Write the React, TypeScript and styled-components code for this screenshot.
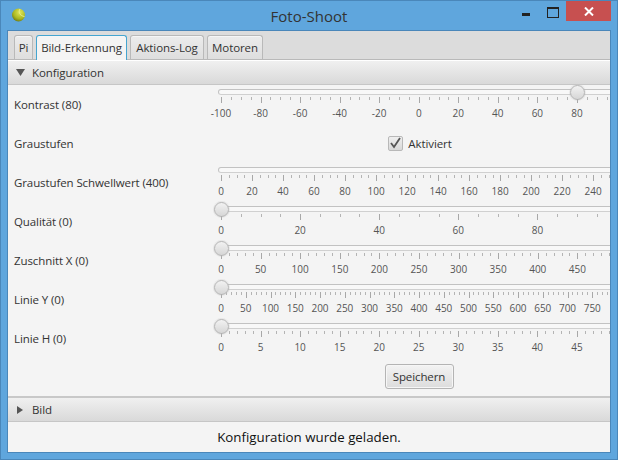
import styled, { createGlobalStyle } from 'styled-components';

const GlobalStyle = createGlobalStyle`
  html, body {
    margin: 0;
    padding: 0;
    background: #5fa6dd;
  }
  * {
    box-sizing: border-box;
  }
`;

const UI_FONT = `'Open Sans', 'Noto Sans', 'Liberation Sans', sans-serif`;

const Window = styled.div`
  width: 618px;
  height: 460px;
  display: flex;
  flex-direction: column;
  background: #5fa6dd;
  border: 1px solid #4a87ba;
  font-family: ${UI_FONT};
  font-size: 11.5px;
  letter-spacing: -0.1px;
  overflow: hidden;
`;
const TitleBar = styled.div`
  height: 29px;
  flex: none;
  display: grid;
  grid-template-columns: 1fr auto 1fr;
  align-items: start;
`;
const AppIcon = styled.svg`
  margin: 6px 0 0 10px;
  display: block;
`;
const Title = styled.div`
  font-size: 15px;
  letter-spacing: 0;
  line-height: 30px;
  color: #333;
`;
const Controls = styled.div`
  display: flex;
  justify-content: flex-end;
  align-items: flex-start;
  margin-right: 6px;
`;
const MinButton = styled.div`
  width: 27px;
  height: 20px;
  display: flex;
  justify-content: center;
  padding-top: 12px;
  &::before {
    content: '';
    width: 8px;
    height: 3px;
    background: #222;
  }
`;
const MaxButton = styled.div`
  width: 27px;
  height: 20px;
  display: flex;
  justify-content: center;
  padding-top: 6px;
  &::before {
    content: '';
    width: 10px;
    height: 8px;
    border: 1px solid #222;
    border-top-width: 2px;
  }
`;
const CloseButton = styled.div`
  width: 45px;
  height: 20px;
  background: #c75050;
  display: flex;
  align-items: center;
  justify-content: center;
`;
const Client = styled.div`
  flex: 1;
  margin: 0 6px 6px 6px;
  min-height: 0;
  display: flex;
  flex-direction: column;
  border: 1px solid #4a87ba;
  background: #f4f4f4;
  overflow: hidden;
`;
const TabStrip = styled.div`
  height: 29px;
  flex: none;
  display: flex;
  align-items: flex-end;
  gap: 3px;
  padding-left: 6px;
  background: #dcdcdc;
  border-bottom: 1px solid #b9b9b9;
`;
const Tab = styled.div<{ $active?: boolean; $width: number }>`
  width: ${(p) => p.$width}px;
  height: ${(p) => (p.$active ? 25 : 24)}px;
  margin-bottom: ${(p) => (p.$active ? -1 : 0)}px;
  border: 1px solid ${(p) => (p.$active ? '#45a5d0' : '#b9b9b9')};
  border-bottom: ${(p) => (p.$active ? 'none' : '0')};
  border-radius: 3px 3px 0 0;
  background: ${(p) =>
    p.$active ? '#f4f4f4' : 'linear-gradient(#ececec, #dedede)'};
  box-shadow: inset 0 1px 0 #f6f6f6;
  line-height: 23px;
  text-align: center;
  color: #333;
  white-space: nowrap;
`;
const AccordionHeader = styled.div<{ $thick?: boolean }>`
  height: ${(p) => (p.$thick ? 26 : 25)}px;
  flex: none;
  display: flex;
  align-items: center;
  gap: 7px;
  padding-left: 8px;
  background: linear-gradient(#f0f0f0, #d9d9d9);
  border-top: ${(p) => (p.$thick ? '2px solid #c8c8c8' : '1px solid #fff')};
  border-bottom: 1px solid #c6c6c6;
  color: #333;
`;
const Arrow = styled.svg`
  display: block;
  flex: none;
`;
const ConfigBody = styled.div`
  flex: 1;
  min-height: 0;
  padding-left: 6px;
  overflow: hidden;
`;
const Row = styled.div`
  height: 39px;
  display: grid;
  grid-template-columns: 204px 404px;
`;
const FieldLabel = styled.div`
  line-height: 39px;
  color: #333;
  white-space: nowrap;
`;
const SliderBox = styled.div`
  position: relative;
  padding-top: 4px;
`;
const Track = styled.div`
  height: 6px;
  border: 1px solid #c2c2c2;
  border-bottom-color: #d0d0d0;
  border-radius: 3px;
  background: #f8f8f8;
`;
const Thumb = styled.div`
  position: absolute;
  top: 0;
  width: 15px;
  height: 15px;
  margin-left: -7.5px;
  border-radius: 50%;
  border: 1px solid #b4b4b4;
  background: linear-gradient(#f2f2f2, #d6d6d6);
  box-shadow: 0 0 0 1px rgba(190, 190, 190, 0.25);
`;
const Ticks = styled.svg`
  display: block;
  margin: 2px 0 0 3px;
`;
const TickLabels = styled.div`
  display: flex;
  margin-top: 2px;
  font-size: 10px;
  letter-spacing: 0;
  line-height: 14px;
  color: #555;
`;
const TickLabel = styled.span`
  flex: none;
  text-align: center;
  white-space: nowrap;
`;
const CheckCell = styled.div`
  height: 39px;
  display: flex;
  align-items: center;
  justify-content: center;
  gap: 5px;
  padding-bottom: 1px;
  color: #333;
`;
const CheckBox = styled.div`
  width: 15px;
  height: 15px;
  border: 1px solid #b8b8b8;
  border-radius: 2px;
  background: linear-gradient(#efefef, #d8d8d8);
  display: flex;
  align-items: center;
  justify-content: center;
`;
const ButtonCell = styled.div`
  display: flex;
  justify-content: center;
  padding: 6px 2px 0 0;
`;
const SaveButton = styled.button`
  width: 69px;
  height: 25px;
  padding: 0 0 1px;
  border: 1px solid #b4b4b4;
  border-radius: 3px;
  background: linear-gradient(#f3f3f3, #dcdcdc);
  box-shadow: inset 0 0 0 1px #f6f6f6;
  font-family: inherit;
  font-size: inherit;
  letter-spacing: inherit;
  color: #333;
`;
const StatusBar = styled.div`
  height: 30px;
  flex: none;
  display: flex;
  align-items: center;
  justify-content: center;
  font-size: 13.3px;
  letter-spacing: 0;
  color: #111;
`;

type SliderProps = {
  labels: string[];
  spacing: number;
  minors: number;
  thumb?: number;
};

const AXIS_WIDTH = 396;

function Slider({ labels, spacing, minors, thumb }: SliderProps) {
  const majorLines: number[] = [];
  const minorLines: number[] = [];
  for (let i = 0; i * spacing <= AXIS_WIDTH; i++) {
    majorLines.push(Math.round(i * spacing) + 0.5);
    for (let m = 1; m <= minors; m++) {
      minorLines.push(
        Math.round((i + m / (minors + 1)) * spacing) + 0.5
      );
    }
  }
  return (
    <SliderBox>
      <Track />
      {thumb !== undefined && <Thumb style={{ left: thumb + 3 }} />}
      <Ticks width={AXIS_WIDTH} height={7}>
        {majorLines.map((x) => (
          <line key={x} x1={x} x2={x} y1={0} y2={6} stroke="#a8a8a8" />
        ))}
        {minorLines.map((x) => (
          <line key={x} x1={x} x2={x} y1={0} y2={3} stroke="#b4b4b4" />
        ))}
      </Ticks>
      <TickLabels style={{ marginLeft: 3 - spacing / 2 }}>
        {labels.map((text) => (
          <TickLabel key={text} style={{ width: spacing }}>
            {text}
          </TickLabel>
        ))}
      </TickLabels>
    </SliderBox>
  );
}

const range = (from: number, to: number, step: number) => {
  const out: string[] = [];
  for (let v = from; v <= to; v += step) out.push(String(v));
  return out;
};

export default function App() {
  return (
    <Window>
      <GlobalStyle />
      <TitleBar>
        <AppIcon width="16" height="16" viewBox="0 0 16 16">
          <defs>
            <radialGradient id="ball" cx="0.6" cy="0.3" r="0.8">
              <stop offset="0" stopColor="#dfe65a" />
              <stop offset="0.6" stopColor="#aab820" />
              <stop offset="1" stopColor="#5f6a14" />
            </radialGradient>
          </defs>
          <circle cx="7.5" cy="8" r="6.5" fill="url(#ball)" />
          <path
            d="M9 2 C7 5 9 9 13.5 9.5"
            fill="none"
            stroke="#eef3a0"
            strokeWidth="0.8"
          />
        </AppIcon>
        <Title>Foto-Shoot</Title>
        <Controls>
          <MinButton />
          <MaxButton />
          <CloseButton>
            <svg width="10" height="9" viewBox="0 0 10 9">
              <path
                d="M1 0.5 L9 8.5 M9 0.5 L1 8.5"
                stroke="#fff"
                strokeWidth="2"
              />
            </svg>
          </CloseButton>
        </Controls>
      </TitleBar>
      <Client>
        <TabStrip>
          <Tab $width={19}>Pi</Tab>
          <Tab $active $width={91}>
            Bild-Erkennung
          </Tab>
          <Tab $width={74}>Aktions-Log</Tab>
          <Tab $width={56}>Motoren</Tab>
        </TabStrip>
        <AccordionHeader>
          <Arrow width="9" height="7" viewBox="0 0 9 7">
            <path d="M0 0 H9 L4.5 7 Z" fill="#555" />
          </Arrow>
          Konfiguration
        </AccordionHeader>
        <ConfigBody>
          <Row>
            <FieldLabel>Kontrast (80)</FieldLabel>
            <Slider labels={range(-100, 80, 20)} spacing={39.56} minors={3} thumb={356} />
          </Row>
          <Row>
            <FieldLabel>Graustufen</FieldLabel>
            <CheckCell>
              <CheckBox>
                <svg width="13" height="12" viewBox="0 0 13 12">
                  <path
                    d="M2 6 L5 10 L11 1"
                    fill="none"
                    stroke="#555"
                    strokeWidth="1.8"
                  />
                </svg>
              </CheckBox>
              Aktiviert
            </CheckCell>
          </Row>
          <Row>
            <FieldLabel>Graustufen Schwellwert (400)</FieldLabel>
            <Slider labels={range(0, 240, 20)} spacing={31.03} minors={3} />
          </Row>
          <Row>
            <FieldLabel>Qualität (0)</FieldLabel>
            <Slider labels={range(0, 80, 20)} spacing={79.12} minors={3} thumb={0} />
          </Row>
          <Row>
            <FieldLabel>Zuschnitt X (0)</FieldLabel>
            <Slider labels={range(0, 450, 50)} spacing={39.6} minors={4} thumb={0} />
          </Row>
          <Row>
            <FieldLabel>Linie Y (0)</FieldLabel>
            <Slider labels={range(0, 750, 50)} spacing={24.75} minors={4} thumb={0} />
          </Row>
          <Row>
            <FieldLabel>Linie H (0)</FieldLabel>
            <Slider labels={range(0, 45, 5)} spacing={39.56} minors={4} thumb={0} />
          </Row>
          <Row>
            <div />
            <ButtonCell>
              <SaveButton>Speichern</SaveButton>
            </ButtonCell>
          </Row>
        </ConfigBody>
        <AccordionHeader $thick>
          <Arrow width="9" height="8" viewBox="0 0 9 8">
            <path d="M1 0 L7 4 L1 8 Z" fill="#555" />
          </Arrow>
          Bild
        </AccordionHeader>
        <StatusBar>Konfiguration wurde geladen.</StatusBar>
      </Client>
    </Window>
  );
}
